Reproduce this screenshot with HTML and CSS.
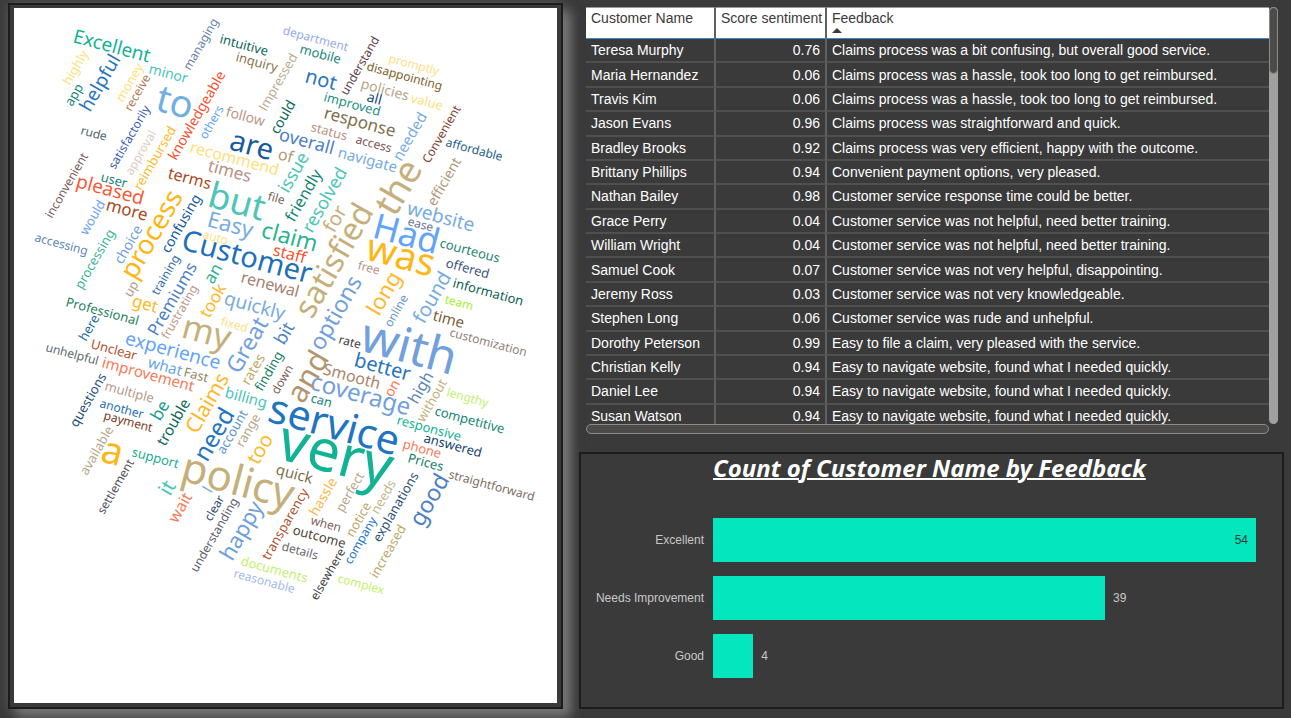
FILE: index.html
```html
<!DOCTYPE html>
<html lang="en">
<head>
<meta charset="utf-8">
<title>Customer Feedback Dashboard</title>
<link rel="stylesheet" href="styles.css">
</head>
<body>
<main class="dashboard">
<section class="cloud-panel" aria-label="Feedback word cloud">
<svg class="cloud" viewBox="14 8 543 695" preserveAspectRatio="xMidYMin meet">
<text class="s19" transform="translate(72 42) rotate(15)" fill="#12b294">Excellent</text>
<text class="s14" transform="translate(148 73) rotate(15)" fill="#4dc5b9">minor</text>
<text class="s38" transform="translate(154 110) rotate(15)" fill="#71afe2">to</text>
<text class="s13" transform="translate(219 43) rotate(15)" fill="#0c6658">intuitive</text>
<text class="s13" transform="translate(235 61) rotate(15)" fill="#8a7550">inquiry</text>
<text class="s14" transform="translate(225 116) rotate(15)" fill="#ba9788">follow</text>
<text class="s12" transform="translate(80 134) rotate(15)" fill="#4c6672">rude</text>
<text class="s13" transform="translate(100 181) rotate(15)" fill="#1a8578">user</text>
<text class="s16" transform="translate(167 178) rotate(15)" fill="#ac4a1e">terms</text>
<text class="s17" transform="translate(207 171) rotate(15)" fill="#ba9188">times</text>
<text class="s16" transform="translate(189 152) rotate(15)" fill="#ffdf7c">recommend</text>
<text class="s29" transform="translate(228 149) rotate(15)" fill="#165a9c">are</text>
<text class="s16" transform="translate(277 159) rotate(15)" fill="#ab9a78">of</text>
<text class="s18" transform="translate(278 140) rotate(15)" fill="#4c7fc4">overall</text>
<text class="s12" transform="translate(282 34) rotate(15)" fill="#99abec">department</text>
<text class="s13" transform="translate(299 53) rotate(15)" fill="#17877a">mobile</text>
<text class="s20" transform="translate(304 82) rotate(15)" fill="#2874bd">not</text>
<text class="s12" transform="translate(366 70) rotate(15)" fill="#7a621f">disappointing</text>
<text class="s12" transform="translate(388 62) rotate(15)" fill="#ffe083">promptly</text>
<text class="s14" transform="translate(360 88) rotate(15)" fill="#b7a788">policies</text>
<text class="s13" transform="translate(410 102) rotate(15)" fill="#ffdf7c">value</text>
<text class="s14" transform="translate(366 101) rotate(15)" fill="#144b78">all</text>
<text class="s13" transform="translate(323 101) rotate(15)" fill="#1c9085">improved</text>
<text class="s17" transform="translate(323 118) rotate(15)" fill="#80704d">response</text>
<text class="s13" transform="translate(310 131) rotate(15)" fill="#ba9188">status</text>
<text class="s12" transform="translate(355 143) rotate(15)" fill="#7a5450">access</text>
<text class="s15" transform="translate(337 157) rotate(15)" fill="#78ace0">navigate</text>
<text class="s12" transform="translate(445 146) rotate(15)" fill="#1d6288">affordable</text>
<text class="s19" transform="translate(406 214) rotate(15)" fill="#78ace0">website</text>
<text class="s35" transform="translate(371 237) rotate(15)" fill="#62a4fc">Had</text>
<text class="s12" transform="translate(407 225) rotate(15)" fill="#6c7399">ease</text>
<text class="s38" transform="translate(364 259) rotate(15)" fill="#fdb714">was</text>
<text class="s13" transform="translate(439 247) rotate(15)" fill="#268570">courteous</text>
<text class="s13" transform="translate(445 267) rotate(15)" fill="#3a5680">offered</text>
<text class="s13" transform="translate(452 287) rotate(15)" fill="#0c5f54">information</text>
<text class="s12" transform="translate(444 303) rotate(15)" fill="#a6ee30">team</text>
<text class="s15" transform="translate(432 320) rotate(15)" fill="#7a6136">time</text>
<text class="s12" transform="translate(449 336) rotate(15)" fill="#948078">customization</text>
<text class="s12" transform="translate(357 269) rotate(15)" fill="#ba9188">free</text>
<text class="s48" transform="translate(358 350) rotate(15)" fill="#71a0dc">with</text>
<text class="s12" transform="translate(338 343) rotate(15)" fill="#40403f">rate</text>
<text class="s20" transform="translate(353 366) rotate(15)" fill="#2874bd">better</text>
<text class="s16" transform="translate(322 374) rotate(15)" fill="#a9846c">Smooth</text>
<text class="s19" transform="translate(75 187) rotate(15)" fill="#f65a38">pleased</text>
<text class="s17" transform="translate(105 210) rotate(15)" fill="#ac4a1e">more</text>
<text class="s12" transform="translate(34 241) rotate(15)" fill="#5b86b8">accessing</text>
<text class="s36" transform="translate(206 206) rotate(15)" fill="#4dc5b9">but</text>
<text class="s22" transform="translate(206 226) rotate(15)" fill="#78ace0">Easy</text>
<text class="s23" transform="translate(260 237) rotate(15)" fill="#2db391">claim</text>
<text class="s12" transform="translate(202 238) rotate(15)" fill="#ffe083">auto</text>
<text class="s12" transform="translate(267 200) rotate(15)" fill="#7a6458">file</text>
<text class="s29" transform="translate(180 249) rotate(15)" fill="#1e6fba">Customer</text>
<text class="s16" transform="translate(272 255) rotate(15)" fill="#f4522f">staff</text>
<text class="s16" transform="translate(240 282) rotate(15)" fill="#a67f70">renewal</text>
<text class="s19" transform="translate(223 304) rotate(15)" fill="#78ace0">quickly</text>
<text class="s17" transform="translate(131 306) rotate(15)" fill="#fdb92a">get</text>
<text class="s13" transform="translate(65 306) rotate(15)" fill="#288064">Professional</text>
<text class="s13" transform="translate(90 348) rotate(15)" fill="#b0522d">Unclear</text>
<text class="s12" transform="translate(45 351) rotate(15)" fill="#5d6a70">unhelpful</text>
<text class="s19" transform="translate(124 344) rotate(15)" fill="#62a4fc">experience</text>
<text class="s15" transform="translate(147 367) rotate(15)" fill="#69a8dc">what</text>
<text class="s13" transform="translate(183 376) rotate(15)" fill="#948660">Fast</text>
<text class="s34" transform="translate(180 337) rotate(15)" fill="#c5b07b">my</text>
<text class="s12" transform="translate(220 325) rotate(15)" fill="#ffe083">fixed</text>
<text class="s15" transform="translate(101 367) rotate(15)" fill="#f77a58">improvement</text>
<text class="s13" transform="translate(104 390) rotate(15)" fill="#ba9788">multiple</text>
<text class="s12" transform="translate(99 407) rotate(15)" fill="#1e6fba">another</text>
<text class="s12" transform="translate(103 419) rotate(15)" fill="#7a3c1e">payment</text>
<text class="s15" transform="translate(224 397) rotate(15)" fill="#4dc5b9">billing</text>
<text class="s38" transform="translate(99 461) rotate(15)" fill="#fdb714">a</text>
<text class="s13" transform="translate(131 456) rotate(15)" fill="#1cac98">support</text>
<text class="s42" transform="translate(179 480) rotate(15)" fill="#c5b07b">policy</text>
<text class="s13" transform="translate(240 565) rotate(15)" fill="#c4f06c">documents</text>
<text class="s12" transform="translate(233 577) rotate(15)" fill="#a5b8ec">reasonable</text>
<text class="s12" transform="translate(281 550) rotate(15)" fill="#66696e">details</text>
<text class="s24" transform="translate(309 389) rotate(15)" fill="#71a0dc">coverage</text>
<text class="s13" transform="translate(310 402) rotate(15)" fill="#148576">can</text>
<text class="s12" transform="translate(446 396) rotate(15)" fill="#c4f06c">lengthy</text>
<text class="s13" transform="translate(434 415) rotate(15)" fill="#148576">competitive</text>
<text class="s13" transform="translate(396 424) rotate(15)" fill="#12b294">responsive</text>
<text class="s13" transform="translate(423 442) rotate(15)" fill="#143f6c">answered</text>
<text class="s13" transform="translate(402 448) rotate(15)" fill="#f77a58">phone</text>
<text class="s13" transform="translate(407 462) rotate(15)" fill="#148064">Prices</text>
<text class="s12" transform="translate(448 478) rotate(15)" fill="#806c64">straightforward</text>
<text class="s41" transform="translate(266 421) rotate(15)" fill="#2175bf">service</text>
<text class="s58" transform="translate(275 458) rotate(15)" fill="#12b294">very</text>
<text class="s15" transform="translate(275 474) rotate(15)" fill="#80704d">quick</text>
<text class="s12" transform="translate(310 524) rotate(15)" fill="#80605c">when</text>
<text class="s13" transform="translate(292 534) rotate(15)" fill="#47423c">outcome</text>
<text class="s12" transform="translate(337 582) rotate(15)" fill="#c4f06c">complex</text>

<text class="s12" transform="translate(190 71) rotate(-60)" fill="#667fae">managing</text>
<text class="s19" transform="translate(90 113) rotate(-60)" fill="#2874bd">helpful</text>
<text class="s13" transform="translate(70 86) rotate(-60)" fill="#ffdf7c">highly</text>
<text class="s13" transform="translate(72 107) rotate(-60)" fill="#148576">app</text>
<text class="s13" transform="translate(123 103) rotate(-60)" fill="#ffdf7c">money</text>
<text class="s12" transform="translate(131 112) rotate(-60)" fill="#b07a50">receive</text>
<text class="s12" transform="translate(115 170) rotate(-60)" fill="#3a5cb0">satisfactorily</text>
<text class="s14" transform="translate(176 161) rotate(-60)" fill="#f4522f">knowledgeable</text>
<text class="s12" transform="translate(206 140) rotate(-60)" fill="#62a4fc">others</text>
<text class="s13 alt" transform="translate(266 112) rotate(-60)" fill="#b7a788">Impressed</text>
<text class="s14" transform="translate(278 135) rotate(-60)" fill="#0c6658">could</text>
<text class="s12" transform="translate(132 176) rotate(-60)" fill="#e0cbc2">approval</text>
<text class="s13" transform="translate(141 191) rotate(-60)" fill="#fdb92a">reimbursed</text>
<text class="s12" transform="translate(347 96) rotate(-60)" fill="#603c48">understand</text>
<text class="s15" transform="translate(401 162) rotate(-60)" fill="#78ace0">needed</text>
<text class="s12" transform="translate(429 164) rotate(-60)" fill="#7a3c28">Convenient</text>
<text class="s37" transform="translate(395 218) rotate(-60)" fill="#c5b07b">the</text>
<text class="s14" transform="translate(435 207) rotate(-60)" fill="#b09878">efficient</text>
<text class="s18" transform="translate(288 194) rotate(-60)" fill="#4dc5b9">issue</text>
<text class="s16" transform="translate(294 223) rotate(-60)" fill="#148576">friendly</text>
<text class="s18" transform="translate(312 234) rotate(-60)" fill="#4dc5b9">resolved</text>
<text class="s20" transform="translate(424 325) rotate(-60)" fill="#78ace0">found</text>
<text class="s12" transform="translate(391 328) rotate(-60)" fill="#6796c8">online</text>
<text class="s22" transform="translate(379 317) rotate(-60)" fill="#fdb92a">long</text>
<text class="s20" transform="translate(334 234) rotate(-60)" fill="#c5b07b">for</text>
<text class="s32" transform="translate(312 320) rotate(-60)" fill="#c5b07b">satisfied</text>
<text class="s23" transform="translate(322 352) rotate(-60)" fill="#71a0dc">options</text>
<text class="s30" transform="translate(303 405) rotate(-60)" fill="#b3946c">and</text>
<text class="s12" transform="translate(52 219) rotate(-60)" fill="#785a60">inconvenient</text>
<text class="s13" transform="translate(87 236) rotate(-60)" fill="#6ca4f4">would</text>
<text class="s13" transform="translate(82 290) rotate(-60)" fill="#3ab592">processing</text>
<text class="s14" transform="translate(122 265) rotate(-60)" fill="#71a0dc">choice</text>
<text class="s27" transform="translate(135 281) rotate(-60)" fill="#fdb714">process</text>
<text class="s14" transform="translate(169 254) rotate(-60)" fill="#165a9c">confusing</text>
<text class="s17" transform="translate(213 285) rotate(-60)" fill="#2db391">an</text>
<text class="s17" transform="translate(209 319) rotate(-60)" fill="#fdb92a">took</text>
<text class="s12" transform="translate(158 296) rotate(-60)" fill="#2f6cab">training</text>
<text class="s17" transform="translate(157 337) rotate(-60)" fill="#4c7fc4">Premiums</text>
<text class="s12" transform="translate(168 340) rotate(-60)" fill="#ba9788">frustrating</text>
<text class="s13" transform="translate(131 298) rotate(-60)" fill="#ba9788">up</text>
<text class="s13" transform="translate(86 342) rotate(-60)" fill="#1c6ba0">here</text>
<text class="s23" transform="translate(239 375) rotate(-60)" fill="#71a0dc">Great</text>
<text class="s18" transform="translate(284 346) rotate(-60)" fill="#4c85c4">bit</text>
<text class="s14" transform="translate(249 386) rotate(-60)" fill="#bea868">rates</text>
<text class="s13" transform="translate(262 392) rotate(-60)" fill="#148064">finding</text>
<text class="s12" transform="translate(278 395) rotate(-60)" fill="#80605c">down</text>
<text class="s13" transform="translate(77 428) rotate(-60)" fill="#24507a">questions</text>
<text class="s17" transform="translate(160 422) rotate(-60)" fill="#1c9c88">be</text>
<text class="s15" transform="translate(165 447) rotate(-60)" fill="#0c6658">trouble</text>
<text class="s21" transform="translate(197 435) rotate(-60)" fill="#fdb92a">Claims</text>
<text class="s24" transform="translate(207 463) rotate(-60)" fill="#2175bf">need</text>
<text class="s13" transform="translate(224 455) rotate(-60)" fill="#6096cc">account</text>
<text class="s13" transform="translate(243 448) rotate(-60)" fill="#b7a788">range</text>
<text class="s20" transform="translate(258 466) rotate(-60)" fill="#fdb92a">too</text>
<text class="s13" transform="translate(87 476) rotate(-60)" fill="#b7a788">available</text>
<text class="s12" transform="translate(104 515) rotate(-60)" fill="#4f4f5c">settlement</text>
<text class="s21" transform="translate(170 497) rotate(-60)" fill="#4dc5b9">it</text>
<text class="s16" transform="translate(177 524) rotate(-60)" fill="#f77a58">wait</text>
<text class="s16 alt" transform="translate(211 494) rotate(-60)" fill="#71afe2">I</text>
<text class="s12" transform="translate(211 522) rotate(-60)" fill="#2c4878">clear</text>
<text class="s12" transform="translate(197 573) rotate(-60)" fill="#5c5c6c">understanding</text>
<text class="s22" transform="translate(232 562) rotate(-60)" fill="#71a0dc">happy</text>
<text class="s13" transform="translate(269 561) rotate(-60)" fill="#b0522d">transparency</text>
<text class="s14" transform="translate(392 398) rotate(-60)" fill="#f77a58">on</text>
<text class="s16" transform="translate(417 405) rotate(-60)" fill="#5b86b8">high</text>
<text class="s13" transform="translate(424 423) rotate(-60)" fill="#c5b07b">without</text>
<text class="s14" transform="translate(317 517) rotate(-60)" fill="#fdb94c">hassle</text>
<text class="s13" transform="translate(343 513) rotate(-60)" fill="#b7a788">perfect</text>
<text class="s13" transform="translate(378 515) rotate(-60)" fill="#c5b68c">needs</text>
<text class="s13" transform="translate(353 538) rotate(-60)" fill="#bea868">notice</text>
<text class="s13" transform="translate(380 543) rotate(-60)" fill="#2c5078">explanations</text>
<text class="s12" transform="translate(351 565) rotate(-60)" fill="#2175bf">company</text>
<text class="s23" transform="translate(422 528) rotate(-60)" fill="#4c7fc4">good</text>
<text class="s13" transform="translate(377 579) rotate(-60)" fill="#bea868">increased</text>
<text class="s12" transform="translate(317 601) rotate(-60)" fill="#40403f">elsewhere</text>
</svg>
</section>

<div class="side">
<section class="table-panel" aria-label="Customer feedback">
<div class="table-view">
<table class="feedback">
<colgroup><col class="col-name"><col class="col-score"><col></colgroup>
<thead>
<tr><th scope="col">Customer Name</th><th scope="col">Score sentiment</th><th scope="col" aria-sort="ascending">Feedback<span class="sort-mark"></span></th></tr>
</thead>
<tbody>
<tr><td>Teresa Murphy</td><td>0.76</td><td>Claims process was a bit confusing, but overall good service.</td></tr>
<tr><td>Maria Hernandez</td><td>0.06</td><td>Claims process was a hassle, took too long to get reimbursed.</td></tr>
<tr><td>Travis Kim</td><td>0.06</td><td>Claims process was a hassle, took too long to get reimbursed.</td></tr>
<tr><td>Jason Evans</td><td>0.96</td><td>Claims process was straightforward and quick.</td></tr>
<tr><td>Bradley Brooks</td><td>0.92</td><td>Claims process was very efficient, happy with the outcome.</td></tr>
<tr><td>Brittany Phillips</td><td>0.94</td><td>Convenient payment options, very pleased.</td></tr>
<tr><td>Nathan Bailey</td><td>0.98</td><td>Customer service response time could be better.</td></tr>
<tr><td>Grace Perry</td><td>0.04</td><td>Customer service was not helpful, need better training.</td></tr>
<tr><td>William Wright</td><td>0.04</td><td>Customer service was not helpful, need better training.</td></tr>
<tr><td>Samuel Cook</td><td>0.07</td><td>Customer service was not very helpful, disappointing.</td></tr>
<tr><td>Jeremy Ross</td><td>0.03</td><td>Customer service was not very knowledgeable.</td></tr>
<tr><td>Stephen Long</td><td>0.06</td><td>Customer service was rude and unhelpful.</td></tr>
<tr><td>Dorothy Peterson</td><td>0.99</td><td>Easy to file a claim, very pleased with the service.</td></tr>
<tr><td>Christian Kelly</td><td>0.94</td><td>Easy to navigate website, found what I needed quickly.</td></tr>
<tr><td>Daniel Lee</td><td>0.94</td><td>Easy to navigate website, found what I needed quickly.</td></tr>
<tr><td>Susan Watson</td><td>0.94</td><td>Easy to navigate website, found what I needed quickly.</td></tr>
</tbody>
</table>
</div>
<div class="scroll-y"><div class="thumb-y"></div></div>
<div class="scroll-x"></div>
</section>

<section class="chart-panel">
<h2 class="chart-title">Count of Customer Name by Feedback</h2>
<div class="bars">
<div class="bar-label">Excellent</div>
<div class="bar-track"><div class="bar" style="width:100%"><span class="inside">54</span></div></div>
<div class="bar-label">Needs Improvement</div>
<div class="bar-track"><div class="bar" style="width:72.2%"></div><span class="outside">39</span></div>
<div class="bar-label">Good</div>
<div class="bar-track"><div class="bar" style="width:7.4%"></div><span class="outside">4</span></div>
</div>
</section>
</div>
</main>
</body>
</html>
```
FILE: styles.css
```css
* { box-sizing: border-box; }

body {
  margin: 0;
  background: #3a3a3a;
  font-family: "Liberation Sans", Arial, sans-serif;
}

.dashboard {
  display: grid;
  grid-template-columns: 555fr 705fr;
  gap: 16px;
  min-height: 100vh;
  padding: 3px 7px 9px 8px;
  overflow: hidden;
}

/* Word cloud */
.cloud-panel {
  display: flex;
  padding: 3px 4px 4px;
  border: 2px solid #1c1c1c;
  background: #3a3a3a;
  box-shadow: 8px 8px 10px #757575, 0 0 12px #5a5a5a;
}

.cloud {
  display: block;
  width: 100%;
  background: #fff;
  font-family: "Noto Sans", "Open Sans", sans-serif;
}

.alt { font-family: "Open Sans", sans-serif; }
.s12 { font-size: 12px; }
.s13 { font-size: 13px; }
.s14 { font-size: 14px; }
.s15 { font-size: 15px; }
.s16 { font-size: 16px; }
.s17 { font-size: 17px; }
.s18 { font-size: 18px; }
.s19 { font-size: 19px; }
.s20 { font-size: 20px; }
.s21 { font-size: 21px; }
.s22 { font-size: 22px; }
.s23 { font-size: 23px; }
.s24 { font-size: 24px; }
.s27 { font-size: 27px; }
.s29 { font-size: 29px; }
.s30 { font-size: 30px; }
.s32 { font-size: 32px; }
.s34 { font-size: 34px; }
.s35 { font-size: 35px; }
.s36 { font-size: 36px; }
.s37 { font-size: 37px; }
.s38 { font-size: 38px; }
.s41 { font-size: 41px; }
.s42 { font-size: 42px; }
.s48 { font-size: 48px; }
.s58 { font-size: 58px; }

.side {
  display: flex;
  flex-direction: column;
  gap: 18px;
  position: relative;
  min-width: 0;
}

/* Table */
.table-panel {
  display: grid;
  grid-template-columns: 1fr 9px;
  grid-template-rows: 417px 10px;
  padding: 4px 6px 0 7px;
}

.table-view { overflow: hidden; }

.feedback {
  width: 100%;
  height: 422px;
  border-collapse: separate;
  border-spacing: 0;
  table-layout: fixed;
  color: #fff;
  font-size: 14px;
  line-height: 16px;
}

.col-name { width: 130px; }
.col-score { width: 111px; }

.feedback th {
  height: 32px;
  padding: 2px 5px 0;
  border-top: 1px solid #999;
  border-bottom: 1px solid #3f86c9;
  background: #fff;
  color: #3a3a3a;
  font-weight: normal;
  text-align: left;
  vertical-align: top;
  white-space: nowrap;
}

.feedback td {
  padding: 3px 5px;
  border-bottom: 2px solid #505050;
  white-space: nowrap;
}

.feedback th:not(:last-child),
.feedback td:not(:last-child) { border-right: 2px solid #606060; }

.feedback td:nth-child(2) { text-align: right; }

.sort-mark {
  display: block;
  width: 0;
  margin-top: 2px;
  border: 5px solid transparent;
  border-top-width: 0;
  border-bottom: 5px solid #3a3a3a;
}

.scroll-y {
  border-radius: 5px;
  background: #a0a0a0;
}

.thumb-y {
  height: 67px;
  border: 1px solid #8c8c8c;
  border-radius: 5px;
  background: #4d4b49;
}

.scroll-x {
  border: 1px solid #8c8c8c;
  border-radius: 5px;
  background: #4d4b49;
}

/* Bar chart */
.chart-panel {
  flex: 1;
  padding: 0 26px 0 8px;
  border: 2px solid #1c1c1c;
  background: #3a3a3a;
}

.chart-title {
  margin: 0 0 36px;
  padding-left: 124px;
  color: #fff;
  font: italic bold 24px/28px "Noto Sans", sans-serif;
  text-decoration: underline;
  text-decoration-thickness: 2px;
  white-space: nowrap;
}

.bars {
  display: grid;
  grid-template-columns: 116px 1fr;
  gap: 14px 8px;
  align-items: center;
  color: #c8c8c8;
  font-size: 12px;
}

.bar-label { text-align: right; padding-right: 1px; }

.bar-track {
  display: flex;
  align-items: center;
}

.bar {
  display: flex;
  align-items: center;
  justify-content: flex-end;
  height: 44px;
  background: #04e6bd;
}

.inside { padding-right: 8px; color: #3a3a3a; }
.outside { padding-left: 8px; }
```
